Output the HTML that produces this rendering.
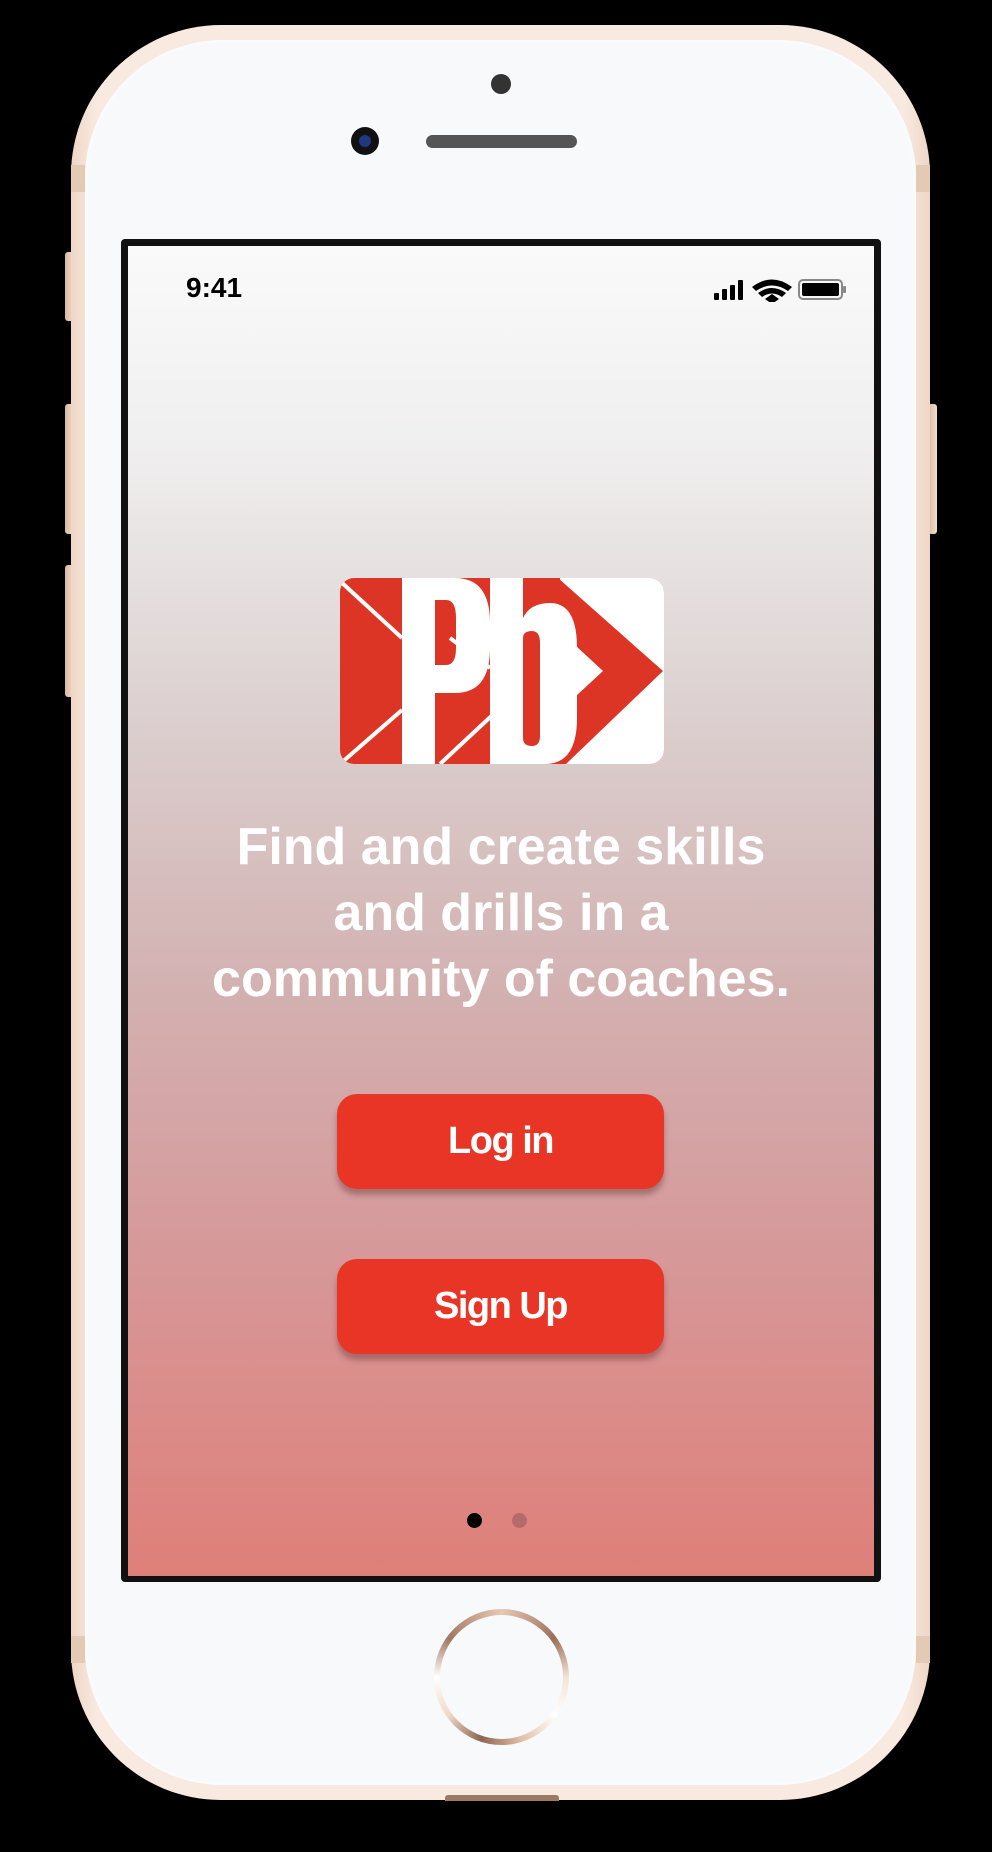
<!DOCTYPE html>
<html><head><meta charset="utf-8"><style>
html,body{margin:0;padding:0;background:#000;}
body{width:992px;height:1852px;position:relative;overflow:hidden;font-family:"Liberation Sans",sans-serif;}
.abs{position:absolute;}
.phone{left:71px;top:25px;width:859px;height:1775px;border-radius:150px;background:linear-gradient(90deg,#efd6c6,#f8eae0 3%,#f8eae0 97%,#efd6c6);}
.face{left:85px;top:40px;width:831px;height:1745px;border-radius:138px;background:#f8f9fb;box-shadow:inset 0 0 6px #fff;}
.screen{left:121px;top:239px;width:760px;height:1343px;background:#111;border-radius:4px;}
.inner{left:128px;top:246px;width:746px;height:1330px;background:linear-gradient(180deg,#fafafa 0%,#f0efef 15%,#dcd0d0 35%,#d3b2b2 55%,#d6999a 75%,#df7f79 100%);}
.btn{left:337px;width:327px;height:95px;background:#e83526;border-radius:20px;color:#fff;font-weight:bold;font-size:38px;letter-spacing:-1.5px;text-align:center;line-height:95px;box-shadow:0 6px 6px rgba(80,30,30,.35);}
.side{background:linear-gradient(90deg,#d9b9a0,#f3ddcc);border-radius:3px;}
</style></head><body>
<div class="abs side" style="left:65px;top:252px;width:9px;height:69px"></div>
<div class="abs side" style="left:65px;top:404px;width:9px;height:130px"></div>
<div class="abs side" style="left:65px;top:565px;width:9px;height:132px"></div>
<div class="abs side" style="left:928px;top:404px;width:9px;height:130px"></div>
<div class="abs phone"></div>
<div class="abs" style="left:71px;top:165px;width:14px;height:27px;background:#e4c9b5"></div>
<div class="abs" style="left:916px;top:165px;width:14px;height:27px;background:#e4c9b5"></div>
<div class="abs" style="left:71px;top:1636px;width:14px;height:27px;background:#e4c9b5"></div>
<div class="abs" style="left:916px;top:1636px;width:14px;height:27px;background:#e4c9b5"></div>
<div class="abs face"></div>
<div class="abs" style="left:491px;top:74px;width:20px;height:20px;border-radius:50%;background:#333"></div>
<div class="abs" style="left:351px;top:127px;width:28px;height:28px;border-radius:50%;background:#111"><div style="margin:8px;width:12px;height:12px;border-radius:50%;background:#1d3a80"></div></div>
<div class="abs" style="left:426px;top:135px;width:151px;height:13px;border-radius:7px;background:#555"></div>
<div class="abs screen"></div>
<div class="abs inner"></div>
<div class="abs" style="left:186px;top:272px;font-size:28px;font-weight:bold;color:#000;">9:41</div>
<svg class="abs" style="left:712px;top:278px" width="136" height="24" viewBox="0 0 136 24">
<rect x="2" y="15" width="5" height="7" rx="1"/><rect x="10" y="11" width="5" height="11" rx="1"/><rect x="18" y="7" width="5" height="15" rx="1"/><rect x="26" y="2" width="5" height="20" rx="1"/>
<path d="M40 9 Q60 -6 80 9 L76 13 Q60 2 44 13Z M46 15 Q60 5 74 15 L70 19 Q60 12 50 19Z M53 21 L60 16 L67 21 L60 26Z"/>
<rect x="87" y="2" width="43" height="19" rx="4" fill="none" stroke="#888" stroke-width="2"/><rect x="90" y="5" width="37" height="13" rx="2"/><rect x="131" y="8" width="3" height="7" rx="1" fill="#888"/>
</svg>
<svg class="abs" style="left:340px;top:578px" width="324" height="186" viewBox="0 0 324 186">
<defs><clipPath id="c"><rect width="324" height="186" rx="14"/></clipPath></defs>
<g clip-path="url(#c)">
<rect width="324" height="186" fill="#dd3525"/>
<rect x="220" width="104" height="186" fill="#fff"/>
<polygon points="218,0 323,93 226,186 218,186" fill="#dd3525"/>
<line x1="0" y1="3" x2="62" y2="60" stroke="#fff" stroke-width="4"/>
<line x1="0" y1="186" x2="62" y2="132" stroke="#fff" stroke-width="4"/>
<line x1="100" y1="186" x2="160" y2="130" stroke="#fff" stroke-width="4"/>
<line x1="110" y1="60" x2="150" y2="90" stroke="#fff" stroke-width="4"/>
<path d="M62 0 H115 Q150 0 150 45 V70 Q150 115 115 115 H95 V186 H62Z M95 22 V87 H106 Q116 87 116 70 V40 Q116 22 106 22Z" fill="#fff" fill-rule="evenodd"/>
<path d="M150 0 H183 V40 Q190 25 210 25 Q237 25 237 70 V140 Q237 186 205 186 H150Z M183 60 V160 Q183 168 192 168 Q200 168 200 158 V65 Q200 53 192 53 Q183 53 183 60Z" fill="#fff" fill-rule="evenodd"/>
<polygon points="236,68 263,93 236,118" fill="#fff"/>
</g></svg>
<div class="abs" style="left:128px;width:746px;top:814px;text-align:center;color:#fff;font-size:52px;font-weight:bold;line-height:66px;">Find and create skills<br>and drills in a<br>community of coaches.</div>
<div class="abs btn" style="top:1094px">Log in</div>
<div class="abs btn" style="top:1259px">Sign Up</div>
<div class="abs" style="left:467px;top:1513px;width:15px;height:15px;border-radius:50%;background:#000"></div>
<div class="abs" style="left:512px;top:1513px;width:15px;height:15px;border-radius:50%;background:#b46b6a"></div>
<div class="abs" style="left:434px;top:1609px;width:135px;height:136px;border-radius:50%;background:conic-gradient(#e8c8b4,#9a6f58 15%,#f4e2d6 25%,#fff 35%,#e2c0a8 45%,#8e6650 55%,#f0d8c8 65%,#fff 75%,#a07860 85%,#e8c8b4);"></div>
<div class="abs" style="left:440px;top:1615px;width:123px;height:124px;border-radius:50%;background:#f8f9fb"></div>
<div class="abs" style="left:445px;top:1795px;width:114px;height:6px;border-radius:3px 3px 0 0;background:#9a7a62"></div>
</body></html>
